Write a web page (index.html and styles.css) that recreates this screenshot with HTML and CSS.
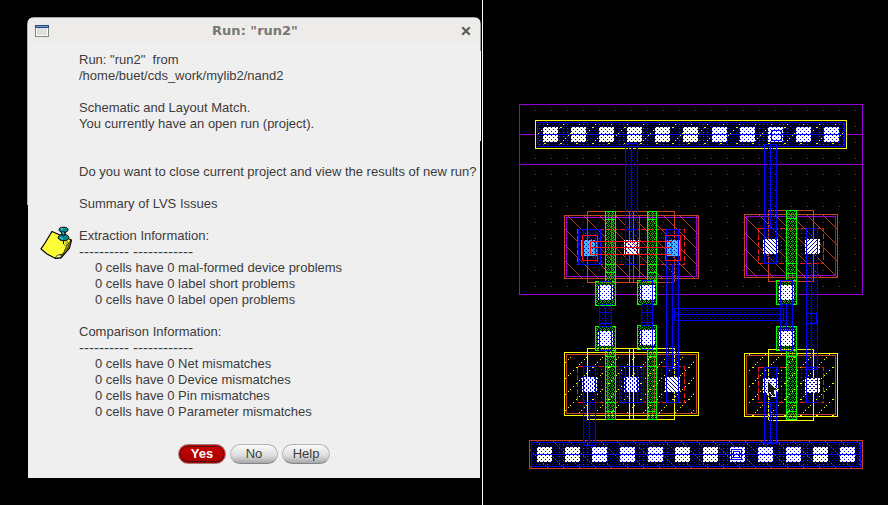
FILE: index.html
```html
<!DOCTYPE html>
<html lang="en">
<head>
<meta charset="utf-8">
<title>Run: "run2"</title>
<link rel="stylesheet" href="styles.css">
</head>
<body>
<main class="desktop">
  <section class="pane">
    <div class="dialog" role="dialog" aria-labelledby="dialog-title">
      <header class="titlebar">
        <svg class="window-icon" viewBox="0 0 14 12" shape-rendering="crispEdges" aria-hidden="true">
          <rect width="14" height="12" fill="#858783"/>
          <rect x="1" y="2" width="12" height="9" fill="#fff"/>
          <rect x="2" y="3" width="10" height="7" fill="#dfe1dd"/>
          <rect width="14" height="3" fill="#204a87"/>
          <rect x="1" y="1" width="12" height="1" fill="#729fcf"/>
        </svg>
        <h1 class="title" id="dialog-title">Run: "run2"</h1>
        <button class="close" type="button" aria-label="Close">
          <svg viewBox="0 0 10 10" aria-hidden="true"><path d="M2 2L8 8M8 2L2 8" fill="none" stroke="#5f5f5c" stroke-width="2.2" stroke-linecap="square"/></svg>
        </button>
      </header>
      <div class="content">
        <svg class="note" viewBox="0 0 33 34" aria-hidden="true">
          <path d="M12 5.500L31.500 14L29.500 22L21 32L15.500 32.500L7 28L1 23L5 17Z" fill="#ffff38" stroke="#000" stroke-width="1.200"/>
          <path d="M31 14L28 22L20.500 31L17 31.500L19 29L23 28L27 19Z" fill="#a0a000" stroke="#000" stroke-width=".6"/>
          <path d="M23 13L28 16L24 20" fill="none" stroke="#77772c" stroke-width="2" stroke-dasharray="1 1"/>
          <path d="M15 32L17.500 29H22L20.500 31.500Z" fill="#ffffc5" stroke="#000" stroke-width=".7"/>
          <ellipse cx="23.500" cy="11.500" rx="5.300" ry="3.300" fill="#008b91" stroke="#000"/>
          <path d="M21.500 5H25.500L25 9Q23.500 10.500 22 9Z" fill="#00747b" stroke="#000"/>
          <ellipse cx="23.500" cy="3.700" rx="4.500" ry="2.500" fill="#009197" stroke="#000"/>
          <path d="M21 3H23M20 11Q21 13 23 13M23 6V8" fill="none" stroke="#76dcdc"/>
          <path d="M23.500 15V18" stroke="#000"/>
        </svg>
        <div class="message">
          <p>Run: "run2"&nbsp; from<br>/home/buet/cds_work/mylib2/nand2</p>
          <p>Schematic and Layout Match.<br>You currently have an open run (project).</p>
          <p class="question">Do you want to close current project and view the results of new run?</p>
          <p>Summary of LVS Issues</p>
          <h2>Extraction Information:</h2>
          <div class="rule">---------- ------------</div>
          <ul>
            <li>0 cells have 0 mal-formed device problems</li>
            <li>0 cells have 0 label short problems</li>
            <li>0 cells have 0 label open problems</li>
          </ul>
          <h2>Comparison Information:</h2>
          <div class="rule">---------- ------------</div>
          <ul>
            <li>0 cells have 0 Net mismatches</li>
            <li>0 cells have 0 Device mismatches</li>
            <li>0 cells have 0 Pin mismatches</li>
            <li>0 cells have 0 Parameter mismatches</li>
          </ul>
        </div>
      </div>
      <footer class="actions">
        <button class="button primary" type="button">Yes</button>
        <button class="button" type="button">No</button>
        <button class="button" type="button">Help</button>
      </footer>
    </div>
  </section>
  <section class="layout-view">
    <svg class="layout" viewBox="483 0 405 505" shape-rendering="crispEdges" role="img" aria-label="NAND2 cell layout">
      <defs>
        <pattern id="grid" x="535" y="110" width="16" height="16" patternUnits="userSpaceOnUse"><rect class="dot" width="1" height="1" fill="#8b00d0"/></pattern>
        <pattern id="metal" width="4" height="4" patternUnits="userSpaceOnUse"><path class="dot" d="M0 0h1v1h-1zM2 2h1v1h-1z" fill="#0000a0"/></pattern>
        <pattern id="active" width="4" height="4" patternUnits="userSpaceOnUse"><path class="dot" d="M1 1h1v1h-1z" fill="#c01a0c"/></pattern>
        <pattern id="activebar" x="535" y="120" width="20" height="4" patternUnits="userSpaceOnUse"><path class="dot" d="M4 0h1v1h-1zM8 0h1v1h-1zM12 0h1v1h-1z" fill="#d02c10"/></pattern>
        <pattern id="poly" width="4" height="4" patternUnits="userSpaceOnUse"><path class="dot" d="M0 0h1v1h-1zM1 1h1v1h-1zM3 1h1v1h-1zM0 2h1v1h-1zM2 3h1v1h-1z" fill="#00c800"/></pattern>
        <pattern id="nsel" width="16" height="16" patternUnits="userSpaceOnUse"><path d="M0 0L16 16" stroke="#b03c20" fill="none"/></pattern>
        <pattern id="psel" width="16" height="16" patternUnits="userSpaceOnUse"><path class="dot" d="M0 15h2v1h-2zM3 12h1v1h-1zM5 10h1v1h-1zM8 7h1v1h-1zM10 5h1v1h-1zM13 2h1v1h-1z" fill="#ff0"/></pattern>
        <pattern id="cutfill" width="4" height="4" patternUnits="userSpaceOnUse"><rect width="4" height="4" fill="#fff"/><path class="dot" d="M0 0h1v1h-1zM2 2h1v1h-1z" fill="#00f"/></pattern>
        <pattern id="cyanfill" width="4" height="4" patternUnits="userSpaceOnUse"><rect width="4" height="4" fill="#3cb9ff"/><path class="dot" d="M0 0h1v1h-1z" fill="#168cf2"/></pattern>
        <pattern id="hotfill" width="5" height="5" patternUnits="userSpaceOnUse"><rect width="5" height="5" fill="#fff"/><path d="M0 0L5 5" stroke="#e02020"/></pattern>
        <rect id="cut" width="15" height="15" fill="url(#cutfill)"/>
      </defs>

      <g class="well">
        <rect x="519.5" y="104.500" width="343" height="190" fill="url(#grid)"/>
        <path d="M519.500 134.500H535M847 134.500H862M519.500 164.500H862"/>
      </g>

      <!-- power rail -->
      <rect x="536" y="121" width="310" height="27" fill="#000"/>
      <rect x="538" y="123" width="307" height="23" fill="url(#metal)"/>
      <rect x="538" y="123" width="307" height="25" fill="url(#activebar)"/>
      <rect x="538" y="123" width="307" height="25" fill="url(#psel)"/>
      <rect class="yellow" x="535.5" y="120.500" width="311" height="28"/>
      <rect class="blue" x="537.5" y="122.500" width="307" height="24"/>
      <use href="#cut" x="543" y="127"/><use href="#cut" x="571" y="127"/><use href="#cut" x="599" y="127"/><use href="#cut" x="627" y="127"/>
      <use href="#cut" x="655" y="127"/><use href="#cut" x="683" y="127"/><use href="#cut" x="712" y="127"/><use href="#cut" x="740" y="127"/>
      <use href="#cut" x="768" y="127"/><use href="#cut" x="796" y="127"/><use href="#cut" x="824" y="127"/>
      <path class="blue" d="M538 134.500H845M771.500 130.500h10v10h-10z"/>

      <!-- ground rail -->
      <rect x="530" y="441" width="332" height="27" fill="url(#nsel)"/>
      <rect x="532" y="443" width="328" height="23" fill="url(#metal)"/>
      <rect x="532" y="443" width="328" height="23" fill="url(#activebar)"/>
      <rect class="brown" x="529.5" y="440.500" width="333" height="28"/>
      <rect class="blue" x="531.5" y="442.500" width="329" height="24"/>
      <use href="#cut" x="537" y="447"/><use href="#cut" x="565" y="447"/><use href="#cut" x="592" y="447"/><use href="#cut" x="620" y="447"/>
      <use href="#cut" x="648" y="447"/><use href="#cut" x="675" y="447"/><use href="#cut" x="703" y="447"/><use href="#cut" x="730" y="447"/>
      <use href="#cut" x="758" y="447"/><use href="#cut" x="786" y="447"/><use href="#cut" x="813" y="447"/><use href="#cut" x="840" y="447"/>
      <path class="blue" d="M532 454.500H860M731.500 449.500h10v10h-10zM733.500 451.500h6v6h-6z"/>

      <!-- upper left devices -->
      <rect x="565" y="216" width="133" height="62" fill="url(#nsel)"/>
      <path class="purple" d="M566.500 217.500h130v59h-130zM613.500 217.500v59"/>
      <path class="brown" d="M564.500 215.500h134v63h-134zM587.500 211.500h87v71h-87zM611.500 216v62M639.500 216v62M629.500 212v70M633.500 212v70"/>
      <rect x="597" y="230" width="27" height="34" fill="url(#active)"/>
      <rect x="639" y="230" width="26" height="34" fill="url(#active)"/>
      <rect class="dashed" x="577.5" y="229.500" width="107" height="35"/>
      <path class="green" d="M605.500 211.500h10v70h-10zM605.500 219.500h10M605.500 264.500h10M605.500 272.500h10M647.500 211.500h9v70h-9zM647.500 219.500h9M647.500 264.500h9M647.500 272.500h9"/>

      <!-- upper right device -->
      <rect x="745" y="215" width="92" height="62" fill="url(#nsel)"/>
      <path class="purple" d="M746.500 216.500h89v59h-89z"/>
      <path class="brown" d="M744.500 214.500h93v63h-93zM768.500 210.500h45v71h-45z"/>
      <rect x="777" y="229" width="29" height="34" fill="url(#active)"/>
      <rect class="dashed" x="758.5" y="228.500" width="65" height="35"/>
      <path class="green" d="M786.500 210.500h10v70h-10zM786.500 218.500h10M786.500 263.500h10M786.500 273.500h10"/>

      <!-- lower left devices -->
      <rect x="565" y="353" width="133" height="62" fill="url(#psel)"/>
      <path class="brown" d="M566.500 354.500h130v59h-130zM607.500 354v59M654.500 354v59"/>
      <path class="yellow" d="M564.500 352.500h134v63h-134zM587.500 348.500h87v71h-87zM629.500 349v70M633.500 349v70"/>
      <rect x="597" y="367" width="27" height="35" fill="url(#active)"/>
      <rect x="639" y="367" width="26" height="35" fill="url(#active)"/>
      <rect class="dashed" x="577.5" y="366.500" width="107" height="36"/>
      <path class="green" d="M605.500 350.500h10v69h-10zM605.500 356.500h10M605.500 366.500h10M605.500 402.500h10M605.500 411.500h10M647.500 349.500h9v70h-9zM647.500 356.500h9M647.500 366.500h9M647.500 402.500h9M647.500 411.500h9"/>

      <!-- lower right device -->
      <rect x="745" y="354" width="92" height="62" fill="url(#psel)"/>
      <path class="brown" d="M746.500 355.500h89v59h-89z"/>
      <path class="yellow" d="M744.500 353.500h93v63h-93zM768.500 349.500h45v71h-45z"/>
      <rect x="777" y="368" width="29" height="35" fill="url(#active)"/>
      <rect class="dashed" x="758.5" y="367.500" width="65" height="35"/>
      <path class="green" d="M786.500 350.500h10v69h-10zM786.500 356.500h10M786.500 402.500h10M786.500 411.500h10"/>

      <!-- gate contact pads -->
      <path class="green" d="M595.500 281.500h20v24h-20zM637.500 280.500h19v24h-19zM776.500 280.500h20v24h-20zM595.500 326.500h20v24h-20zM637.500 325.500h19v24h-19zM776.500 326.500h20v24h-20z"/>
      <use href="#cut" x="598" y="285"/><use href="#cut" x="640" y="285"/><use href="#cut" x="779" y="285"/>
      <use href="#cut" x="598" y="331"/><use href="#cut" x="640" y="330"/><use href="#cut" x="779" y="331"/>

      <!-- diffusion contacts -->
      <rect x="581" y="240" width="16" height="16" fill="url(#cyanfill)"/>
      <rect x="665" y="240" width="15" height="16" fill="url(#cyanfill)"/>
      <rect x="624" y="240" width="15" height="15" fill="url(#hotfill)"/>
      <use href="#cut" x="763" y="239"/><use href="#cut" x="805" y="239"/>
      <use href="#cut" x="582" y="377"/><use href="#cut" x="624" y="377"/><use href="#cut" x="665" y="377"/>
      <use href="#cut" x="763" y="378"/><use href="#cut" x="805" y="378"/>

      <!-- metal routing -->
      <g class="wire">
        <path d="M625.500 143.500h12v121h-12zM764.500 144.500h12v119h-12zM578.500 229.500h22v35h-22zM666.500 229.500h12v173h-12zM674.500 308.500h109v12h-109zM599.500 304.500h12v22h-12zM641.500 304.500h11v21h-11zM780.500 304.500h12v26h-12zM806.500 228.500h11v174h-11zM583.500 366.500h12v79h-12zM619.500 366.500h24v36h-24zM764.500 367.500h12v76h-12z"/>
      </g>
      <g class="blue">
        <path d="M625.500 229.500h12M631.500 144V230M764.500 228.500h12M770.500 145V229M583.500 230v34M595.500 230v34"/>
        <path d="M672.500 264V368M666.500 366.500h12M666.500 368.500h12M674.500 314.500h109"/>
        <path d="M599.500 281.500h12v69h-12zM605.500 304v22M599.500 312.500h12M599.500 323.500h12"/>
        <path d="M641.500 280.500h11v69h-11zM647.500 304v22M641.500 312.500h11M641.500 322.500h11"/>
        <path d="M780.500 280.500h12v70h-12zM786.500 304v26"/>
        <path d="M811.500 263v105M806.500 313.500h10v10h-10M806.500 367.500h11M806.500 369.500h11"/>
        <path d="M583.500 402.500h12M589.500 403v42M625.500 367v35M637.500 367v35M764.500 402.500h12M770.500 403v40"/>
      </g>

      <!-- highlighted net -->
      <path class="red" d="M582.500 235.500h15v25h-15zM665.500 235.500h15v25h-15zM590.500 241.500h81v13h-81zM590.500 247.500h81M597.500 242v13M665.500 242v13"/>

      <path d="M767 380V395L770 392L773 397L776 396L774 391L778 390Z" fill="#161616" stroke="#e9e9e9" stroke-width="1"/>
    </svg>
  </section>
</main>
</body>
</html>
```
FILE: styles.css
```css
* {
  box-sizing: border-box;
}

body {
  margin: 0;
  background: #000;
  font-family: "Liberation Sans", Arial, sans-serif;
  font-size: 13px;
  line-height: 16px;
  color: #3c3c3c;
}

.desktop {
  display: grid;
  grid-template-columns: minmax(0, 483fr) minmax(0, 405fr);
  min-height: 100vh;
}

.pane {
  padding: 17px 1px 27px 27px;
  border-right: 1px solid #fff;
}

.dialog {
  border-radius: 7px 7px 0 0;
  background:
    linear-gradient(#b2b2b2 188px, #000 188px) left / 1px 100% no-repeat,
    linear-gradient(#999 34px, #fff 34px, #fff 124px, #000 124px) right / 1px 100% no-repeat,
    linear-gradient(#aaa, #aaa) top / 100% 1px no-repeat,
    linear-gradient(#edecea 25px, #efefef 25px);
}

.titlebar {
  display: flex;
  align-items: center;
  height: 25px;
  padding: 2px 10px 0 8px;
}

.window-icon {
  width: 14px;
  height: 12px;
}

.title {
  flex: 1;
  margin: 0;
  font-family: "DejaVu Sans", sans-serif;
  font-size: 13px;
  font-weight: bold;
  line-height: 16px;
  text-align: center;
  color: #777773;
}

.close {
  display: flex;
  padding: 0;
  border: 0;
  background: none;
}

.close svg {
  width: 10px;
  height: 10px;
}

.content {
  display: flex;
  align-items: center;
  gap: 6px;
  padding: 0 4px 0 13px;
}

.note {
  flex: none;
  width: 33px;
  height: 34px;
}

.message {
  padding: 10px 0 24px;
  white-space: nowrap;
}

.message p {
  margin: 0 0 16px;
}

.message .question {
  margin-top: 32px;
}

.message h2 {
  margin: 0;
  font-size: 13px;
  font-weight: normal;
}

.message ul {
  margin: 0 0 16px;
  padding-left: 16px;
  list-style: none;
}

.message ul:last-child {
  margin-bottom: 0;
}

.rule {
  font-size: 15px;
}

.actions {
  display: flex;
  justify-content: center;
  gap: 4px;
  padding-bottom: 14px;
}

.button {
  width: 48px;
  height: 20px;
  padding: 0;
  border: 1px solid #b5b5b5;
  border-bottom-color: #858585;
  border-radius: 10px;
  background: linear-gradient(#fafafa, #dcdcdc 60%, #a8a8a8);
  font: inherit;
  color: #3c3c3c;
}

.primary {
  border-color: #a77;
  background: linear-gradient(#c80000, #a80000);
  outline: 1px dotted #300;
  outline-offset: -3px;
  font-weight: bold;
  color: #fff;
}

.layout-view {
  min-width: 0;
}

.layout {
  display: block;
  width: 100%;
  height: auto;
}

.dot {
  shape-rendering: geometricPrecision;
}

.well {
  stroke: #9400d8;
  fill: none;
}

.yellow,
.brown,
.purple,
.blue,
.red,
.dashed {
  fill: none;
}

.yellow {
  stroke: #ff0;
}

.brown {
  stroke: #c54224;
}

.purple {
  stroke: #9400d8;
}

.blue {
  stroke: #00f;
}

.red {
  stroke: #ff1010;
}

.dashed {
  stroke: #f01818;
  stroke-dasharray: 5 2;
}

.green {
  stroke: #0f0;
  fill: url(#poly);
}

.wire {
  stroke: #00f;
  fill: url(#metal);
}
```
